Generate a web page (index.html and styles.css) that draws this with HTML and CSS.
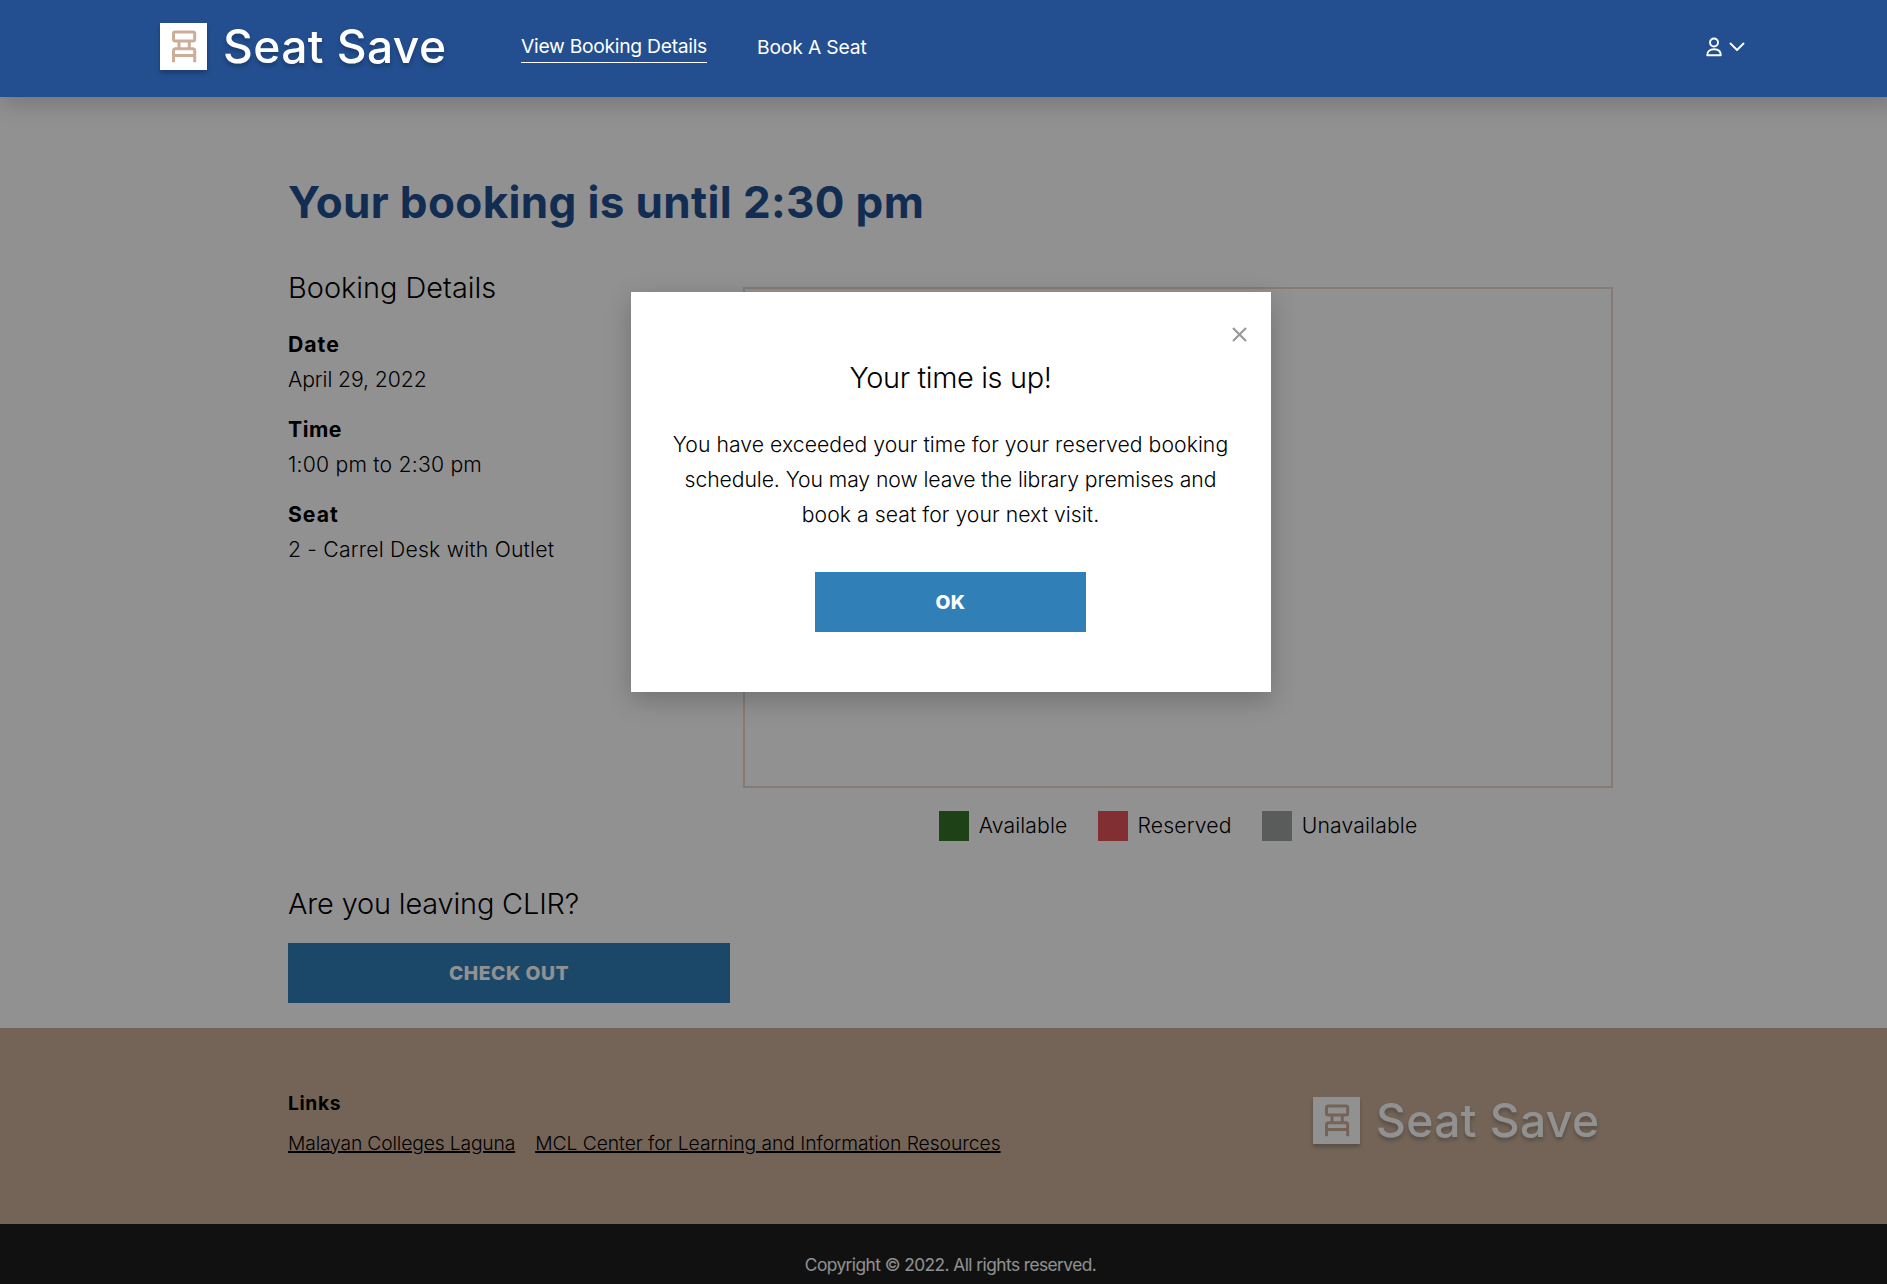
FILE: index.html
```html
<!DOCTYPE html>
<html lang="en">
<head>
<meta charset="utf-8">
<title>Seat Save</title>
<link rel="stylesheet" href="styles.css">
</head>
<body>
<svg class="sprite" aria-hidden="true">
  <symbol id="chair" viewBox="0 0 47 47">
    <rect x="0" y="0" width="47" height="47" fill="#fff"/>
    <g fill="none" stroke="currentColor" stroke-width="3" stroke-linejoin="round">
      <rect x="13.5" y="9.1" width="21.2" height="9" rx="1.8"/>
      <path d="M19 18v7.500M29.300 18v7.500"/>
      <path d="M13.500 39.300V27.800q0-2 2-2h17.200q2 0 2 2v11.500M13.500 32.500h21.200"/>
    </g>
  </symbol>
</svg>
<div class="page">
  <header class="header">
    <div class="brand">
      <svg class="brand-mark"><use href="#chair"/></svg>
      <span class="brand-name">Seat Save</span>
    </div>
    <nav class="nav">
      <a class="nav-link active">View Booking Details</a>
      <a class="nav-link second">Book A Seat</a>
    </nav>
    <div class="account">
      <svg width="16" height="20" viewBox="0 0 16 20" fill="none" stroke="#fff" stroke-width="1.9" stroke-linejoin="round"><circle cx="8" cy="5.5" r="4"/><path d="M1.200 18.300c0-4 3-6 6.800-6s6.800 2 6.800 6z"/></svg>
      <svg width="16" height="10" viewBox="0 0 16 10" fill="none" stroke="#fff" stroke-width="1.9" stroke-linecap="round" stroke-linejoin="round"><path d="M1.500 1.500L8 8l6.500-6.500"/></svg>
    </div>
  </header>

  <main class="main">
    <h1 class="title">Your booking is until 2:30 pm</h1>
    <div class="columns">
      <section class="details">
        <h2 class="subtitle">Booking Details</h2>
        <dl class="facts">
          <div><dt>Date</dt><dd class="date">April 29, 2022</dd></div>
          <div><dt class="time-label">Time</dt><dd>1:00 pm to 2:30 pm</dd></div>
          <div><dt>Seat</dt><dd>2 - Carrel Desk with Outlet</dd></div>
        </dl>
      </section>
      <section class="map">
        <div class="map-frame"></div>
        <ul class="legend">
          <li><i class="swatch available"></i><span>Available</span></li>
          <li><i class="swatch reserved"></i><span>Reserved</span></li>
          <li><i class="swatch unavailable"></i><span>Unavailable</span></li>
        </ul>
      </section>
    </div>
    <h2 class="subtitle leaving">Are you leaving CLIR?</h2>
    <button class="button checkout">CHECK OUT</button>
  </main>

  <footer class="footer">
    <div>
      <h3 class="links-title">Links</h3>
      <div class="links"><a class="college">Malayan Colleges Laguna</a><a class="center">MCL Center for Learning and Information Resources</a></div>
    </div>
    <div class="brand">
      <svg class="brand-mark"><use href="#chair"/></svg>
      <span class="brand-name">Seat Save</span>
    </div>
  </footer>
  <div class="copyright">Copyright © 2022. All rights reserved.</div>

  <div class="overlay">
    <div class="modal">
      <svg class="close" viewBox="0 0 15 15" stroke="#999" stroke-width="2.2" fill="none"><path d="M1 1l13 13M14 1L1 14"/></svg>
      <h2 class="modal-title">Your time is up!</h2>
      <p class="modal-text">You have exceeded your time for your reserved booking<br><span class="second-line">schedule. You may now leave the library premises and</span><br>book a seat for your next visit.</p>
      <button class="button ok">OK</button>
    </div>
  </div>
</div>
</body>
</html>
```
FILE: styles.css
```css
* { box-sizing: border-box; }
html { overflow: hidden; }
body {
  margin: 0;
  font-family: "Inter", "Open Sans", sans-serif;
  font-weight: 300;
  color: #000;
  overflow: hidden;
}
h1, h2, h3, p, dl, dd, ul { margin: 0; padding: 0; }
.sprite { position: absolute; width: 0; height: 0; }
.page { position: relative; width: 1901px; height: 1284px; overflow: hidden; background: #fff; }

.header {
  position: relative;
  z-index: 3;
  height: 97px;
  padding: 0 156px 0 160px;
  display: flex;
  background: #234f90;
  box-shadow: 0 4px 24px rgba(0, 0, 0, .22);
}
.brand { display: flex; gap: 16px; width: 288px; height: 47px; color: #ccae98; filter: drop-shadow(0 3px 2px rgba(0, 0, 0, .25)); }
.header .brand { margin-top: 23px; }
.brand-mark { width: 47px; height: 47px; flex: none; }
.brand-name { font-size: 46.2px; font-weight: 500; line-height: 47px; letter-spacing: .4px; color: #fff; white-space: nowrap; }

.nav { display: flex; gap: 50px; margin: 34px 0 0 73px; align-items: flex-start; }
.nav-link { font-size: 19.3px; font-weight: 400; line-height: 24px; letter-spacing: -.17px; color: #fff; white-space: nowrap; }
.nav-link.active { height: 29px; letter-spacing: -.28px; border-bottom: 1px solid #fff; }
.nav-link.second { margin-top: 1px; }
.account { display: flex; gap: 7px; margin-left: auto; align-items: center; height: 94px; }

.main { height: 931px; padding: 77px 288px 25px; }
.title { font-size: 44px; font-weight: 700; line-height: 56px; letter-spacing: .36px; color: #234f90; white-space: nowrap; }
.columns { display: flex; justify-content: space-between; margin-top: 35px; }
.subtitle { padding-top: 1px; font-size: 28.9px; font-weight: 300; line-height: 44px; white-space: nowrap; }
.facts { display: grid; gap: 15px; margin-top: 17px; font-size: 21.2px; line-height: 35px; letter-spacing: .2px; white-space: nowrap; }
.facts dt { font-weight: 700; letter-spacing: 1px; }
.facts .time-label { letter-spacing: .55px; }
.facts .date { letter-spacing: -.1px; }
.map { width: 870px; padding-top: 22px; }
.map-frame { height: 501px; border: 2px solid #e9d9d0; }
.legend { display: flex; justify-content: center; gap: 30px; margin-top: 23px; list-style: none; font-size: 21.2px; line-height: 29px; letter-spacing: .14px; }
.legend li { display: flex; gap: 10px; }
.swatch { width: 30px; height: 30px; }
.available { background: #36732b; }
.reserved { background: #e4545a; }
.unavailable { background: #9ea1a0; }
.leaving { margin-top: 40px; letter-spacing: -.15px; }
.button { display: block; height: 60px; padding: 0; border: 0; background: #307fb7; color: #fff; font: 800 19.3px/60px "Inter", sans-serif; letter-spacing: .55px; }
.checkout { width: 442px; margin-top: 17px; }

.footer { display: flex; justify-content: space-between; height: 196px; padding: 59px 300px 0 288px; background: #ccb19b; }
.links-title { font-size: 19.3px; font-weight: 700; line-height: 32px; letter-spacing: .6px; }
.links { display: flex; gap: 20px; margin-top: 8px; font-size: 19.3px; line-height: 32px; white-space: nowrap; }
.links a { text-decoration: underline; text-decoration-thickness: 2px; }
.college { letter-spacing: -.16px; }
.center { letter-spacing: -.05px; }
.footer .brand { margin-top: 10px; }
.copyright { height: 60px; padding-top: 25px; background: #1e1e1e; color: #fff; font-size: 17.3px; font-weight: 400; line-height: 32px; letter-spacing: -.54px; text-align: center; }

.overlay { position: absolute; inset: 0; z-index: 2; display: flex; justify-content: center; padding-top: 292px; background: rgba(0, 0, 0, .43); }
.modal { position: relative; width: 640px; height: 400px; background: #fff; box-shadow: 0 8px 24px rgba(0, 0, 0, .22); text-align: center; padding-top: 64px; }
.close { position: absolute; top: 35px; right: 24px; width: 15px; height: 15px; }
.modal-title { font-size: 28.9px; font-weight: 300; line-height: 44px; letter-spacing: -.34px; }
.modal-text { margin-top: 27px; font-size: 21.2px; line-height: 35px; letter-spacing: .05px; white-space: nowrap; }
.second-line { letter-spacing: -.09px; }
.ok { width: 271px; margin: 40px auto 0; }
```
